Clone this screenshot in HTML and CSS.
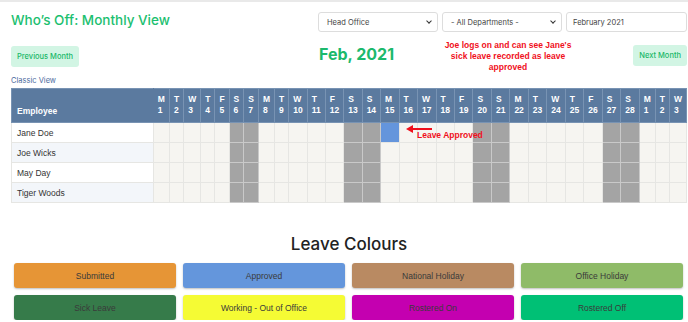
FILE: index.html
```html
<!DOCTYPE html>
<html lang="en">
<head>
    <meta charset="UTF-8">
    <meta name="viewport" content="width=device-width, initial-scale=1.0">
    <title>Who's Off: Monthly View</title>
    <link rel="stylesheet" href="styles.css">
</head>
<body>
    <div class="page">
        <div class="top-bar">
            <h1 class="title">Who’s Off: Monthly View</h1>
            <div class="filters">
                <div class="select">Head Office <span class="chevron"></span></div>
                <div class="select">- All Departments - <span class="chevron"></span></div>
                <div class="select month-input">February 2021</div>
            </div>
        </div>

        <div class="month-bar">
            <div class="month-left">
                <button class="btn-month">Previous Month</button>
            </div>
            <div class="month-right">
                <h2 class="month-name">Feb, 2021</h2>
                <p class="note">Joe logs on and can see Jane's<br>sick leave recorded as leave<br>approved</p>
                <button class="btn-month">Next Month</button>
            </div>
        </div>

        <a class="classic-link" href="#">Classic View</a>

        <div class="calendar-wrap">
            <table class="calendar" id="calendar">
                <thead>
                    <tr id="head-row">
                        <th class="emp-head">Employee</th>
                    </tr>
                </thead>
                <tbody id="cal-body"></tbody>
            </table>
            <div class="callout">
                <span class="callout-arrow"></span>
                <span class="callout-text">Leave Approved</span>
            </div>
        </div>

        <h2 class="legend-title">Leave Colours</h2>
        <div class="legend">
            <div class="legend-item submitted">Submitted</div>
            <div class="legend-item approved">Approved</div>
            <div class="legend-item national">National Holiday</div>
            <div class="legend-item office">Office Holiday</div>
            <div class="legend-item sick">Sick Leave</div>
            <div class="legend-item working">Working - Out of Office</div>
            <div class="legend-item rostered-on">Rostered On</div>
            <div class="legend-item rostered-off">Rostered Off</div>
        </div>
    </div>

    <script>
        var letters = ['M', 'T', 'W', 'T', 'F', 'S', 'S'];
        var days = [];
        for (var i = 1; i <= 28; i++) {
            days.push({ letter: letters[(i - 1) % 7], num: i, weekend: (i - 1) % 7 >= 5 });
        }
        days.push({ letter: 'M', num: 1, weekend: false });
        days.push({ letter: 'T', num: 2, weekend: false });
        days.push({ letter: 'W', num: 3, weekend: false });

        var employees = ['Jane Doe', 'Joe Wicks', 'May Day', 'Tiger Woods'];

        var headRow = document.getElementById('head-row');
        days.forEach(function (d) {
            var th = document.createElement('th');
            th.className = 'day-head';
            th.innerHTML = d.letter + '<br>' + d.num;
            headRow.appendChild(th);
        });

        var body = document.getElementById('cal-body');
        employees.forEach(function (name, row) {
            var tr = document.createElement('tr');
            var td = document.createElement('td');
            td.className = 'emp-name';
            td.textContent = name;
            tr.appendChild(td);
            days.forEach(function (d, col) {
                var cell = document.createElement('td');
                cell.className = 'day';
                if (d.weekend) cell.className += ' weekend';
                if (row === 0 && col === 14) cell.className += ' approved-cell';
                tr.appendChild(cell);
            });
            body.appendChild(tr);
        });
    </script>
</body>
</html>
```

FILE: styles.css
```css
* {
    box-sizing: border-box;
}

html, body {
    margin: 0;
    padding: 0;
    background: #ffffff;
    font-family: "Liberation Sans", Arial, sans-serif;
    color: #333333;
}

body {
    border-top: 2px solid #e9e9e9;
}

.page {
    padding: 0 1px 0 11px;
}

.top-bar {
    display: flex;
    justify-content: space-between;
    align-items: flex-start;
    padding-top: 8px;
}

.title {
    margin: 0;
    font-family: Inter, "Noto Sans", sans-serif;
    font-size: 13.5px;
    font-weight: 500;
    color: #1cc070;
    line-height: 20px;
}

.filters {
    display: flex;
    gap: 4px;
    padding-top: 2px;
}

.select {
    width: 120px;
    height: 20px;
    border: 1px solid #dddddd;
    border-radius: 3px;
    padding: 0 6px 0 8px;
    display: flex;
    align-items: center;
    justify-content: space-between;
    font-family: Inter, "Noto Sans", sans-serif;
    font-size: 7.5px;
    color: #444444;
}

.select.month-input {
    width: 121px;
    padding-left: 6px;
}

.chevron {
    width: 4px;
    height: 4px;
    border-right: 1.2px solid #333333;
    border-bottom: 1.2px solid #333333;
    transform: rotate(45deg);
    margin-top: -2px;
}

.month-bar {
    display: flex;
    margin-top: 13px;
}

.month-left {
    width: 308px;
}

.month-right {
    flex: 1;
    display: flex;
    align-items: flex-start;
}

.btn-month {
    height: 21px;
    padding: 0 6px;
    border: none;
    border-radius: 3px;
    background: #d2f5e4;
    color: #1ab869;
    font-family: Inter, "Noto Sans", sans-serif;
    font-size: 7.5px;
    font-weight: 500;
}

.month-name {
    margin: -6px 0 0;
    width: 104px;
    font-family: Inter, "Noto Sans", sans-serif;
    font-size: 16px;
    font-weight: 700;
    color: #1cb96c;
    line-height: 30px;
}

.note {
    margin: -5px 0 0 0;
    width: 170px;
    text-align: center;
    font-size: 8.5px;
    font-weight: bold;
    line-height: 11px;
    color: #f0101c;
}

.month-right .btn-month {
    margin-left: auto;
}

.classic-link {
    display: block;
    margin-top: 3px;
    font-family: Inter, "Noto Sans", sans-serif;
    font-size: 7.5px;
    color: #4d6b9e;
    text-decoration: none;
}

.calendar-wrap {
    position: relative;
    margin-top: 3px;
}

.calendar {
    width: 100%;
    border-collapse: collapse;
    font-size: 8.5px;
}

.calendar th {
    background: #5b7a9f;
    color: #ffffff;
    font-weight: bold;
    text-align: left;
    vertical-align: top;
    border: 1px solid #7893b3;
    line-height: 11px;
}

.calendar .emp-head {
    width: 143px;
    vertical-align: bottom;
    padding: 0 5px 5px;
    border-right-color: #5b7a9f;
}

.calendar .day-head {
    padding: 5px 4px 6px;
    white-space: nowrap;
}

.calendar td {
    height: 20px;
    border: 1px solid #e6e6e3;
}

.emp-name {
    padding: 0 5px;
    background: #ffffff;
    color: #333333;
}

tbody tr:nth-child(even) .emp-name {
    background: #f3f6fa;
}

.day {
    background: #f6f5f1;
}

.day.weekend {
    background: #a4a4a4;
    border-color: #c9c9c9;
}

.day.approved-cell {
    background: #6495dc;
}

.callout {
    position: absolute;
    left: 395px;
    top: 41px;
}

.callout-arrow {
    position: absolute;
    left: 6px;
    top: -1px;
    width: 20px;
    height: 2px;
    background: #f0101c;
}

.callout-arrow::before {
    content: '';
    position: absolute;
    left: -6px;
    top: -3px;
    border-top: 4px solid transparent;
    border-bottom: 4px solid transparent;
    border-right: 7px solid #f0101c;
}

.callout-text {
    position: absolute;
    left: 11px;
    top: 1px;
    white-space: nowrap;
    font-size: 8.5px;
    font-weight: bold;
    color: #f0101c;
}

.legend-title {
    margin: 31px 0 0;
    text-align: center;
    font-family: Inter, "Noto Sans", sans-serif;
    font-size: 17px;
    font-weight: 500;
    color: #222222;
}

.legend {
    display: grid;
    grid-template-columns: repeat(4, 1fr);
    gap: 7px;
    margin: 9px 4px 0 3px;
}

.legend-item {
    height: 25px;
    border-radius: 3px;
    display: flex;
    align-items: center;
    justify-content: center;
    font-size: 8.5px;
    color: #3a3a3a;
    box-shadow: 0 1px 2px rgba(0, 0, 0, 0.25);
}

.submitted { background: #e69536; }
.approved { background: #6496dc; }
.national { background: #b98a62; }
.office { background: #8fbb68; }
.sick { background: #367b4a; }
.working { background: #f5fb34; }
.rostered-on { background: #c400b0; }
.rostered-off { background: #00c075; }
```
